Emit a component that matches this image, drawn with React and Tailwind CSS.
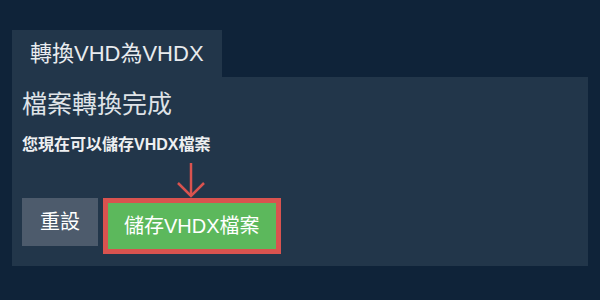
import React from 'react';

function DownArrow() {
  return (
    <svg width="30" height="36" viewBox="0 0 30 36" className="block">
      <line x1="15" y1="1" x2="15" y2="33" stroke="#d9534f" strokeWidth="2.5" />
      <polyline points="2,21 15,34 28,21" fill="none" stroke="#d9534f" strokeWidth="2.5" />
    </svg>
  );
}

export default function App() {
  return (
    <div
      className="w-[600px] h-[300px] bg-[#0f2339] px-[12px] pt-[30px]"
      style={{ fontFamily: '"Liberation Sans", "Noto Sans CJK TC", sans-serif' }}
    >
      <div className="inline-flex items-center h-[47px] px-[18px] bg-[#22364a] text-[#e8ebee] text-[22px]">
        轉換VHD為VHDX
      </div>
      <div className="bg-[#22364a] px-[10px] pt-[11px] pb-[12px]">
        <div className="text-[25px] leading-[32px] text-[#dfe3e7]">檔案轉換完成</div>
        <div className="mt-[14px] text-[16px] leading-[21px] font-bold text-[#eef0f2]">
          您現在可以儲存VHDX檔案
        </div>
        <div className="ml-[154px] mt-[7px]">
          <DownArrow />
        </div>
        <div className="flex items-start gap-[5px]">
          <button className="h-[48px] px-[18px] bg-[#4d5b6c] text-white text-[20px]">重設</button>
          <button className="h-[56px] px-[16px] bg-[#5cb85c] border-[5px] border-[#d9534f] text-white text-[20px]">
            儲存VHDX檔案
          </button>
        </div>
      </div>
    </div>
  );
}
